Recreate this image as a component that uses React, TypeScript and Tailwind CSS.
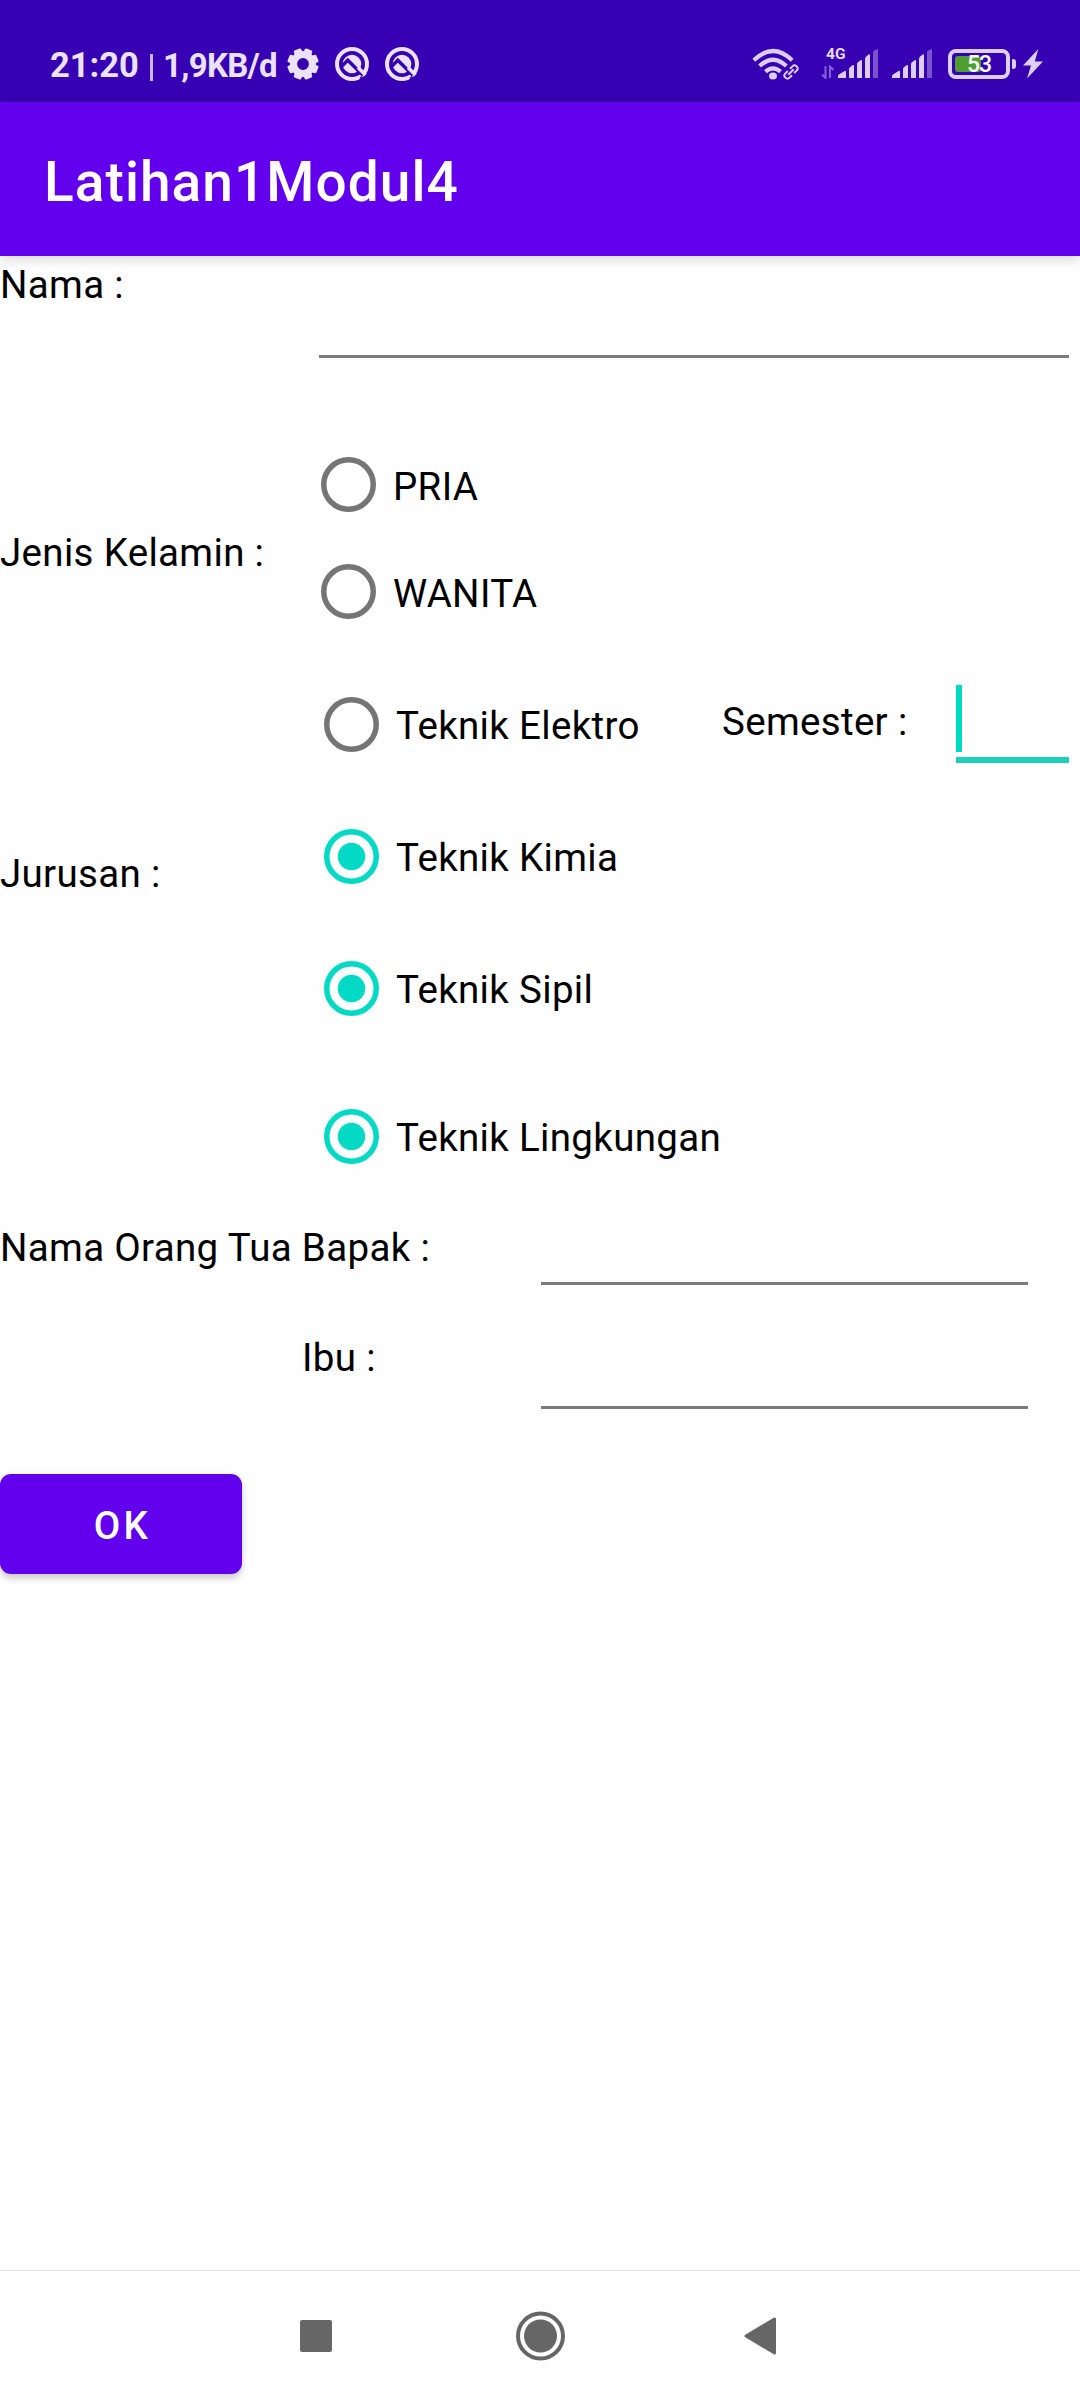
import React from "react";

const TEXT = "text-[38.5px] leading-[52px] tracking-[0.0085em] whitespace-pre";

function Gear() {
  const teeth = [0, 45, 90, 135, 180, 225, 270, 315];
  return (
    <svg className="mt-[48px] ml-[10px] h-8 w-8 shrink-0" viewBox="-16 -16 32 32" fill="#ebe2fb">
      {teeth.map((a) => (
        <path key={a} transform={`rotate(${a + 22.5})`} d="M-4.6 -8 L-3.9 -14.6 Q-3.7 -15.6 -2.7 -15.6 H2.7 Q3.7 -15.6 3.9 -14.6 L4.6 -8 Z" />
      ))}
      <circle r="9.4" fill="none" stroke="#ebe2fb" strokeWidth="7" />
    </svg>
  );
}

function QIcon({ className }: { className: string }) {
  return (
    <svg className={`mt-[47px] h-[34px] w-[34px] shrink-0 ${className}`} viewBox="0 0 34 34" fill="none">
      <circle cx="17" cy="17" r="15" stroke="#ebe2fb" strokeWidth="4" />
      <circle cx="17" cy="17" r="9.3" fill="#ebe2fb" />
      <path d="M7 19 L12.8 13.2 L28 28.4" stroke="#3700b3" strokeWidth="3.4" />
      <path d="M25.5 30 L29 33.5" stroke="#3700b3" strokeWidth="3" />
      <path d="M23 20.5 L30.5 28" stroke="#ebe2fb" strokeWidth="3.6" />
    </svg>
  );
}

function Wifi() {
  return (
    <svg className="mt-[48px] h-[33px] w-[48px] shrink-0" viewBox="0 0 48 33" fill="none" stroke="#dccff5">
      <path d="M1.8 12.2 Q21 -6.2 40.2 12.2" strokeWidth="4.2" />
      <path d="M7.6 18 Q21 5.5 34.4 18" strokeWidth="4.2" />
      <path d="M13.4 23.7 Q21 17 28.6 23.7" strokeWidth="4.2" />
      <ellipse cx="21" cy="28" rx="4" ry="3.6" fill="#dccff5" stroke="none" />
      <g transform="translate(39 24) rotate(-45)" strokeWidth="2">
        <path d="M-1.5 -3 H-5 A3 3 0 0 0 -5 3 H-1.5" />
        <path d="M1.5 -3 H5 A3 3 0 0 1 5 3 H1.5" />
        <path d="M-3.8 0 H3.8" />
      </g>
    </svg>
  );
}

function Bars({ className }: { className: string }) {
  return (
    <svg className={`mt-[48px] h-[31px] w-[40px] shrink-0 ${className}`} viewBox="0 0 40 31" fill="#dccff5">
      <path d="M0 30 V28 Q0 27 1 26.5 L6.5 23 Q8 22.3 8 24 V30 Z" />
      <path d="M11 30 V21 Q11 20 12 19.3 L14.5 17.3 Q16 16.5 16 18 V30 Z" />
      <path d="M19 30 V16 Q19 15 20 14.2 L22.5 12.2 Q24 11.4 24 13 V30 Z" />
      <path d="M27 30 V11 Q27 9.7 28 8.8 L30.5 6.5 Q32 5.7 32 7.5 V30 Z" />
      <path opacity=".4" d="M35 30 V5 Q35 3.6 36 2.8 L38.5 1.2 Q40 .6 40 2.5 V30 Z" />
    </svg>
  );
}

function StatusBar() {
  return (
    <div className="flex h-[102px] bg-[#3700b3] font-medium text-[#ebe2fb]">
      <span className="mt-[44px] ml-[50px] w-[89px] text-[34.5px] leading-[42px] font-bold">21:20</span>
      <span className="mt-[54px] ml-[11px] h-[27px] w-[3px] bg-[#c9b8ee]" />
      <span className="mt-[45px] ml-[10px] w-[114px] text-[33px] leading-[42px] font-bold tracking-[-0.7px] whitespace-nowrap">1,9KB/d</span>
      <Gear />
      <QIcon className="ml-[16px]" />
      <QIcon className="ml-[16px]" />
      <div className="ml-auto flex">
        <Wifi />
        <div className="relative ml-[21px] w-[17px]">
          <span className="absolute top-[45px] left-[5px] text-[15.5px] leading-[18px] font-bold text-[#e6dbfa]">4G</span>
          <svg className="mt-[65px] h-[14px] w-[14px]" viewBox="0 0 14 14" fill="none" stroke="#8562d2" strokeWidth="2">
            <path d="M4.5 1 V13 L1 9.5 M9 13 V1.500 L12.500 5" />
          </svg>
        </div>
        <Bars className="" />
        <Bars className="ml-[14px]" />
        <div className="relative mt-[49px] ml-[16px] h-[30px] w-[62px] rounded-[8px] border-4 border-[#dccff5]">
          <div className="absolute top-[3px] left-[3px] h-[16px] w-[26px] rounded-[3px] bg-[#4e9f2f]" />
          <span className="absolute top-[-1px] left-0 w-full text-center text-[23px] leading-[25px] font-medium tracking-[-1px] text-white">53</span>
        </div>
        <div className="mt-[59px] ml-[2px] h-[10px] w-[4px] rounded-r-[3px] rounded-l-[1px] bg-[#dccff5]" />
        <svg className="mt-[49px] mr-[37px] ml-[7px] h-[30px] w-[20px]" viewBox="0 0 20 30" fill="#dccff5">
          <path d="M15.300 0 L0 16.500 H8 L4 29.500 L20 12.500 H11.800 Z" />
        </svg>
      </div>
    </div>
  );
}

function Radio({ label, checked = false, className }: { label: string; checked?: boolean; className: string }) {
  return (
    <label className={`flex items-center pl-[16px] ${className}`}>
      <svg className="h-[55px] w-[55px] shrink-0" viewBox="0 0 55 55" fill="none">
        <circle cx="27.5" cy="27.5" r="24.75" strokeWidth="5.5" stroke={checked ? "#03dac5" : "#757575"} />
        {checked && <circle cx="27.5" cy="27.5" r="13.75" fill="#03dac5" />}
      </svg>
      <span className={`mt-1 ml-[17px] ${TEXT}`}>{label}</span>
    </label>
  );
}

function Field({ className }: { className: string }) {
  return <div className={`shrink-0 border-b-[3px] border-[#7b7b7b] ${className}`} />;
}

export default function App() {
  return (
    <div className="flex h-[2400px] w-[1080px] flex-col overflow-hidden bg-[#fefefe] font-['Roboto',sans-serif] text-black">
      <StatusBar />
      <header className="relative flex h-[154px] shrink-0 items-center bg-[#6200ee] pl-[44px] shadow-[0_3px_12px_rgba(0,0,0,0.16)]">
        <h1 className="mt-[5px] text-[55px] leading-[64px] font-medium tracking-[0.0195em] text-white">Latihan1Modul4</h1>
      </header>

      <main className="flex flex-1 flex-col">
        <div className="flex h-[175px]">
          <span className={`w-[319px] pt-[3px] ${TEXT}`}>Nama :</span>
          <Field className="h-[102px] w-[750px]" />
        </div>

        <div className="flex h-[214px]">
          <span className={`w-[305px] pt-[96px] ${TEXT}`}>Jenis Kelamin :</span>
          <div>
            <Radio label="PRIA" className="h-[107px]" />
            <Radio label="WANITA" className="h-[107px]" />
          </div>
        </div>

        <div className="flex h-[557px]">
          <span className={`w-[308px] shrink-0 pt-[203px] ${TEXT}`}>Jurusan :</span>
          <div className="flex-1 pt-[13px]">
            <div className="flex h-[132px]">
              <Radio label="Teknik Elektro" className="w-[414px] shrink-0" />
              <span className={`w-[234px] shrink-0 pt-[38px] ${TEXT}`}>Semester :</span>
              <div className="h-[105px] w-[113px] border-b-[6px] border-[#1fcfbc] pt-[27px]">
                <div className="h-[67px] w-[6px] bg-[#03dac5]" />
              </div>
            </div>
            <Radio label="Teknik Kimia" checked className="h-[132px]" />
            <Radio label="Teknik Sipil" checked className="h-[132px]" />
            <Radio label="Teknik Lingkungan" checked className="mt-[16px] h-[132px]" />
          </div>
        </div>

        <div className="flex h-[110px]">
          <span className={`w-[541px] pt-[20px] ${TEXT}`}>Nama Orang Tua Bapak :</span>
          <Field className="h-[83px] w-[487px]" />
        </div>
        <div className="flex h-[162px]">
          <span className={`w-[541px] pt-[20px] pl-[302px] ${TEXT}`}>Ibu :</span>
          <Field className="h-[97px] w-[487px]" />
        </div>

        <button className="flex h-[100px] w-[242px] items-center justify-center rounded-[11px] bg-[#6200ee] pt-[3px] pl-[3px] text-[38.5px] leading-[52px] font-medium tracking-[0.0893em] text-white shadow-[0_5px_6px_rgba(0,0,0,0.16),0_1px_6px_rgba(0,0,0,0.06)]">
          OK
        </button>
      </main>

      <nav className="flex h-[130px] shrink-0 items-center border-t border-[#e2e2e2] pl-[300px]">
        <div className="h-[32px] w-[32px] rounded-[2px] bg-[#666666]" />
        <svg className="ml-[184px] h-[50px] w-[50px]" viewBox="0 0 50 50">
          <circle cx="24.500" cy="25" r="22.500" fill="none" stroke="#666666" strokeWidth="4" />
          <circle cx="24.500" cy="25" r="16.500" fill="#666666" />
        </svg>
        <svg className="ml-[178px] h-[38px] w-[32px]" viewBox="0 0 32 38">
          <path d="M2 19 L30.500 2 V36 Z" fill="#666666" stroke="#666666" strokeWidth="3" strokeLinejoin="round" />
        </svg>
      </nav>
    </div>
  );
}
